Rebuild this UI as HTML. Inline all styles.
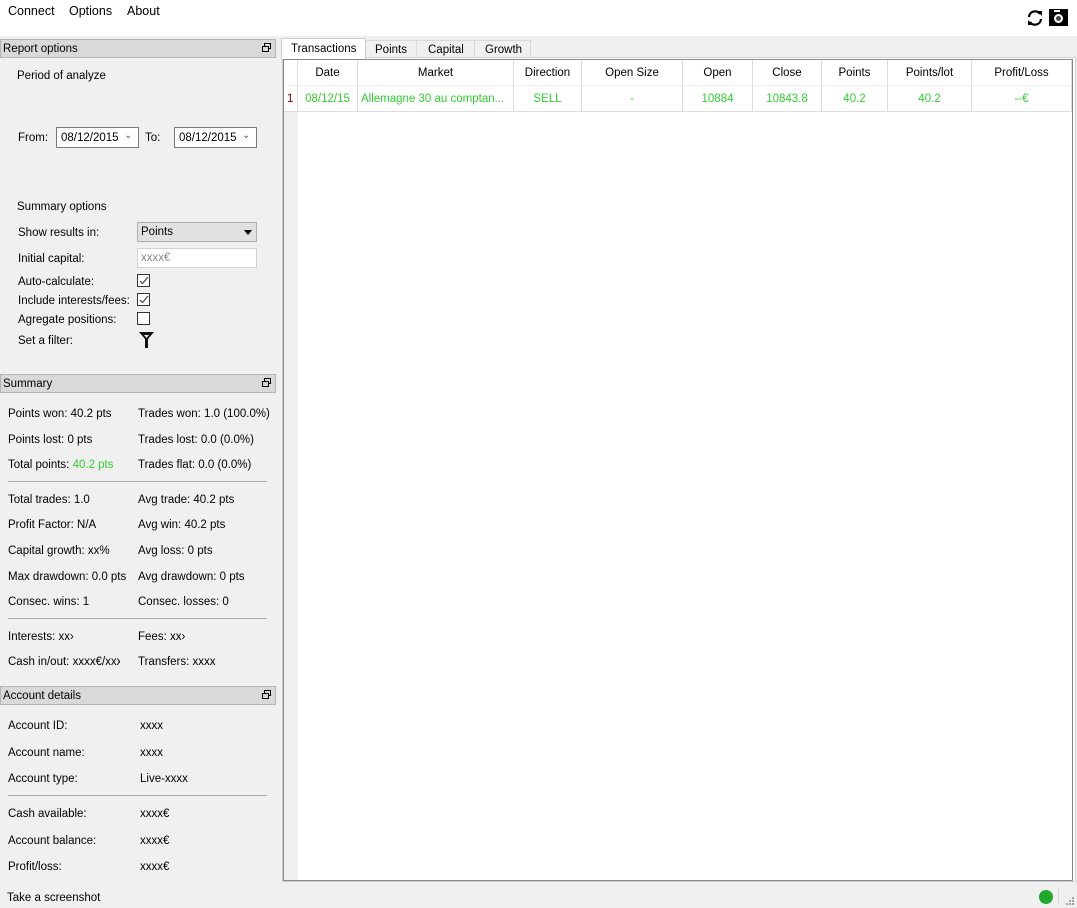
<!DOCTYPE html>
<html><head><meta charset="utf-8"><style>
*{margin:0;padding:0;box-sizing:border-box}
body{width:1077px;height:908px;background:#f0f0f0;font-family:"Liberation Sans",sans-serif;font-size:11.5px;color:#000;position:relative;overflow:hidden}
.a{position:absolute;white-space:nowrap;line-height:14px;margin-top:1px}
.g{color:#33cc33}
.bar{position:absolute;left:0;width:276px;height:19px;background:#d9d9d9;border:1px solid #b4b4b4;}
.bar span{position:absolute;left:2px;top:2px;line-height:14px}
.fl{position:absolute;right:4px;top:3px;width:9px;height:9px}
.hr{position:absolute;left:8px;width:259px;height:1px;background:#a8a8a8}
.cb{position:absolute;width:13px;height:13px;border:1px solid #333;background:#fff}
.vl{position:absolute;top:60px;height:51px;width:1px;background:#dcdcdc}
.hc{position:absolute;text-align:center;line-height:14px;margin-top:1px}
</style></head><body>
<div style="position:absolute;left:0;top:0;width:1077px;height:36px;background:#fff"></div>
<div class="a" style="left:8px;top:3px;font-size:12.5px">Connect</div>
<div class="a" style="left:69px;top:3px;font-size:12.5px">Options</div>
<div class="a" style="left:127px;top:3px;font-size:12.5px">About</div>
<svg style="position:absolute;left:1026px;top:9px" width="18" height="18" viewBox="0 0 18 18"><path d="M3 8 A6 6 0 0 1 14 5" stroke="#000" stroke-width="2.2" fill="none"/><path d="M15 10 A6 6 0 0 1 4 13" stroke="#000" stroke-width="2.2" fill="none"/><path d="M11 2 L16 2 L16 7Z" fill="#000"/><path d="M7 16 L2 16 L2 11Z" fill="#000"/></svg>
<div style="position:absolute;left:1049px;top:9px;width:19px;height:17px;background:#000"><div style="position:absolute;left:5px;top:5px;width:9px;height:9px;border-radius:50%;border:2px solid #fff;background:#444"></div><div style="position:absolute;left:5px;top:1px;width:6px;height:2px;background:#fff"></div></div>

<div class="bar" style="top:39px"><span>Report options</span><svg class="fl" viewBox="0 0 9 9"><rect x="2.5" y="0.5" width="6" height="5" fill="none" stroke="#000"/><rect x="0.5" y="3.5" width="6" height="5" fill="#d9d9d9" stroke="#000"/></svg></div>
<div class="a" style="left:17px;top:68px">Period of analyze</div>
<div class="a" style="left:18px;top:130px">From:</div>
<div style="position:absolute;left:56px;top:127px;width:83px;height:21px;border:1px solid #7a7a7a;background:#fff"><span class="a" style="left:4px;top:2px">08/12/2015</span><span class="a" style="left:67px;top:0px;color:#555;font-size:10px">&#8964;</span></div>
<div class="a" style="left:145px;top:130px">To:</div>
<div style="position:absolute;left:174px;top:127px;width:83px;height:21px;border:1px solid #7a7a7a;background:#fff"><span class="a" style="left:4px;top:2px">08/12/2015</span><span class="a" style="left:67px;top:0px;color:#555;font-size:10px">&#8964;</span></div>
<div class="a" style="left:17px;top:199px">Summary options</div>
<div class="a" style="left:18px;top:225px">Show results in:</div>
<div style="position:absolute;left:137px;top:222px;width:120px;height:20px;border:1px solid #adadad;background:#e1e1e1"><span class="a" style="left:3px;top:1px">Points</span><div style="position:absolute;left:106px;top:7px;border-left:4px solid transparent;border-right:4px solid transparent;border-top:5px solid #000"></div></div>
<div class="a" style="left:18px;top:251px">Initial capital:</div>
<div style="position:absolute;left:137px;top:248px;width:120px;height:20px;border:1px solid #d0d0d0;background:#fff"><span class="a" style="left:3px;top:1px;color:#888">xxxx€</span></div>
<div class="a" style="left:18px;top:274px">Auto-calculate:</div>
<div class="cb" style="left:137px;top:274px"><svg width="11" height="11" style="position:absolute;left:0;top:0"><path d="M2 6 L4.5 8.5 L10 2" stroke="#444" fill="none" stroke-width="1.2"/></svg></div>
<div class="a" style="left:18px;top:293px">Include interests/fees:</div>
<div class="cb" style="left:137px;top:293px"><svg width="11" height="11" style="position:absolute;left:0;top:0"><path d="M2 6 L4.5 8.5 L10 2" stroke="#444" fill="none" stroke-width="1.2"/></svg></div>
<div class="a" style="left:18px;top:312px">Agregate positions:</div>
<div class="cb" style="left:137px;top:312px"></div>
<div class="a" style="left:18px;top:333px">Set a filter:</div>
<svg style="position:absolute;left:139px;top:332px" width="15" height="16" viewBox="0 0 15 16"><path d="M0 0 H15 L9 7 V16 H6 V7 Z" fill="#111"/><path d="M5 3 H10 L7.5 6Z" fill="#f0f0f0"/></svg>

<div class="bar" style="top:374px"><span>Summary</span><svg class="fl" viewBox="0 0 9 9"><rect x="2.5" y="0.5" width="6" height="5" fill="none" stroke="#000"/><rect x="0.5" y="3.5" width="6" height="5" fill="#d9d9d9" stroke="#000"/></svg></div>
<div class="a" style="left:8px;top:406px">Points won: 40.2 pts</div><div class="a" style="left:138px;top:406px">Trades won: 1.0 (100.0%)</div>
<div class="a" style="left:8px;top:432px">Points lost: 0 pts</div><div class="a" style="left:138px;top:432px">Trades lost: 0.0 (0.0%)</div>
<div class="a" style="left:8px;top:457px">Total points: <span class="g">40.2 pts</span></div><div class="a" style="left:138px;top:457px">Trades flat: 0.0 (0.0%)</div>
<div class="hr" style="top:481px"></div>
<div class="a" style="left:8px;top:492px">Total trades: 1.0</div><div class="a" style="left:138px;top:492px">Avg trade: 40.2 pts</div>
<div class="a" style="left:8px;top:517px">Profit Factor: N/A</div><div class="a" style="left:138px;top:517px">Avg win: 40.2 pts</div>
<div class="a" style="left:8px;top:543px">Capital growth: xx%</div><div class="a" style="left:138px;top:543px">Avg loss: 0 pts</div>
<div class="a" style="left:8px;top:569px">Max drawdown: 0.0 pts</div><div class="a" style="left:138px;top:569px">Avg drawdown: 0 pts</div>
<div class="a" style="left:8px;top:594px">Consec. wins: 1</div><div class="a" style="left:138px;top:594px">Consec. losses: 0</div>
<div class="hr" style="top:618px"></div>
<div class="a" style="left:8px;top:629px">Interests: xx›</div><div class="a" style="left:138px;top:629px">Fees: xx›</div>
<div class="a" style="left:8px;top:654px;width:112px;overflow:hidden">Cash in/out: xxxx€/xxx</div><div class="a" style="left:138px;top:654px">Transfers: xxxx</div>

<div class="bar" style="top:686px"><span>Account details</span><svg class="fl" viewBox="0 0 9 9"><rect x="2.5" y="0.5" width="6" height="5" fill="none" stroke="#000"/><rect x="0.5" y="3.5" width="6" height="5" fill="#d9d9d9" stroke="#000"/></svg></div>
<div class="a" style="left:8px;top:718px">Account ID:</div><div class="a" style="left:140px;top:718px">xxxx</div>
<div class="a" style="left:8px;top:745px">Account name:</div><div class="a" style="left:140px;top:745px">xxxx</div>
<div class="a" style="left:8px;top:771px">Account type:</div><div class="a" style="left:140px;top:771px">Live-xxxx</div>
<div class="hr" style="top:795px"></div>
<div class="a" style="left:8px;top:806px">Cash available:</div><div class="a" style="left:140px;top:806px">xxxx€</div>
<div class="a" style="left:8px;top:833px">Account balance:</div><div class="a" style="left:140px;top:833px">xxxx€</div>
<div class="a" style="left:8px;top:859px">Profit/loss:</div><div class="a" style="left:140px;top:859px">xxxx€</div>

<div style="position:absolute;left:365px;top:40px;width:52px;height:18px;background:#f0f0f0;border:1px solid #d9d9d9;"></div>
<div class="a" style="left:375px;top:42px">Points</div>
<div style="position:absolute;left:416px;top:40px;width:59px;height:18px;border:1px solid #d9d9d9;"></div>
<div class="a" style="left:428px;top:42px">Capital</div>
<div style="position:absolute;left:474px;top:40px;width:57px;height:18px;border:1px solid #d9d9d9;"></div>
<div class="a" style="left:485px;top:42px">Growth</div>
<div style="position:absolute;left:282px;top:57px;width:794px;height:825px;border:1px solid #d0d0d0;background:#fff"></div>
<div style="position:absolute;left:281px;top:38px;width:85px;height:21px;background:#fff;border:1px solid #d0d0d0;border-bottom:none"></div>
<div class="a" style="left:291px;top:41px">Transactions</div>
<div style="position:absolute;left:283px;top:59px;width:790px;height:822px;border:1px solid #828790;background:#fff"></div>
<div style="position:absolute;left:284px;top:111px;width:14px;height:769px;background:#f0f0f0"></div>
<div style="position:absolute;left:284px;top:111px;width:788px;height:1px;background:#dcdcdc"></div>
<div style="position:absolute;left:284px;top:85px;width:788px;height:1px;background:#f0f0f0"></div>
<div class="vl" style="left:297px"></div><div class="vl" style="left:357px"></div><div class="vl" style="left:513px"></div><div class="vl" style="left:581px"></div><div class="vl" style="left:682px"></div><div class="vl" style="left:752px"></div><div class="vl" style="left:821px"></div><div class="vl" style="left:887px"></div><div class="vl" style="left:971px"></div><div class="vl" style="left:1071px"></div>
<div class="hc" style="left:298px;width:59px;top:65px">Date</div>
<div class="hc" style="left:358px;width:155px;top:65px">Market</div>
<div class="hc" style="left:514px;width:67px;top:65px">Direction</div>
<div class="hc" style="left:582px;width:100px;top:65px">Open Size</div>
<div class="hc" style="left:683px;width:69px;top:65px">Open</div>
<div class="hc" style="left:753px;width:68px;top:65px">Close</div>
<div class="hc" style="left:822px;width:65px;top:65px">Points</div>
<div class="hc" style="left:888px;width:83px;top:65px">Points/lot</div>
<div class="hc" style="left:972px;width:99px;top:65px">Profit/Loss</div>
<div class="a" style="left:287px;top:91px;color:#800000">1</div>
<div class="hc g" style="left:298px;width:59px;top:91px">08/12/15</div>
<div class="a g" style="left:361px;top:91px">Allemagne 30 au comptan...</div>
<div class="hc g" style="left:514px;width:67px;top:91px">SELL</div>
<div class="hc g" style="left:582px;width:100px;top:91px">-</div>
<div class="hc g" style="left:683px;width:69px;top:91px">10884</div>
<div class="hc g" style="left:753px;width:68px;top:91px">10843.8</div>
<div class="hc g" style="left:822px;width:65px;top:91px">40.2</div>
<div class="hc g" style="left:888px;width:83px;top:91px">40.2</div>
<div class="hc g" style="left:972px;width:99px;top:91px">--€</div>

<div class="a" style="left:7px;top:890px">Take a screenshot</div>
<div style="position:absolute;left:1039px;top:890px;width:14px;height:14px;border-radius:50%;background:#22a82c"></div>
<div style="position:absolute;left:1058px;top:886px;width:1px;height:20px;background:#dcdcdc"></div>
<svg style="position:absolute;left:1065px;top:896px" width="10" height="10"><g fill="#a0a0a0"><rect x="7" y="1" width="2" height="2"/><rect x="4" y="4" width="2" height="2"/><rect x="7" y="4" width="2" height="2"/><rect x="1" y="7" width="2" height="2"/><rect x="4" y="7" width="2" height="2"/><rect x="7" y="7" width="2" height="2"/></g></svg>
</body></html>
